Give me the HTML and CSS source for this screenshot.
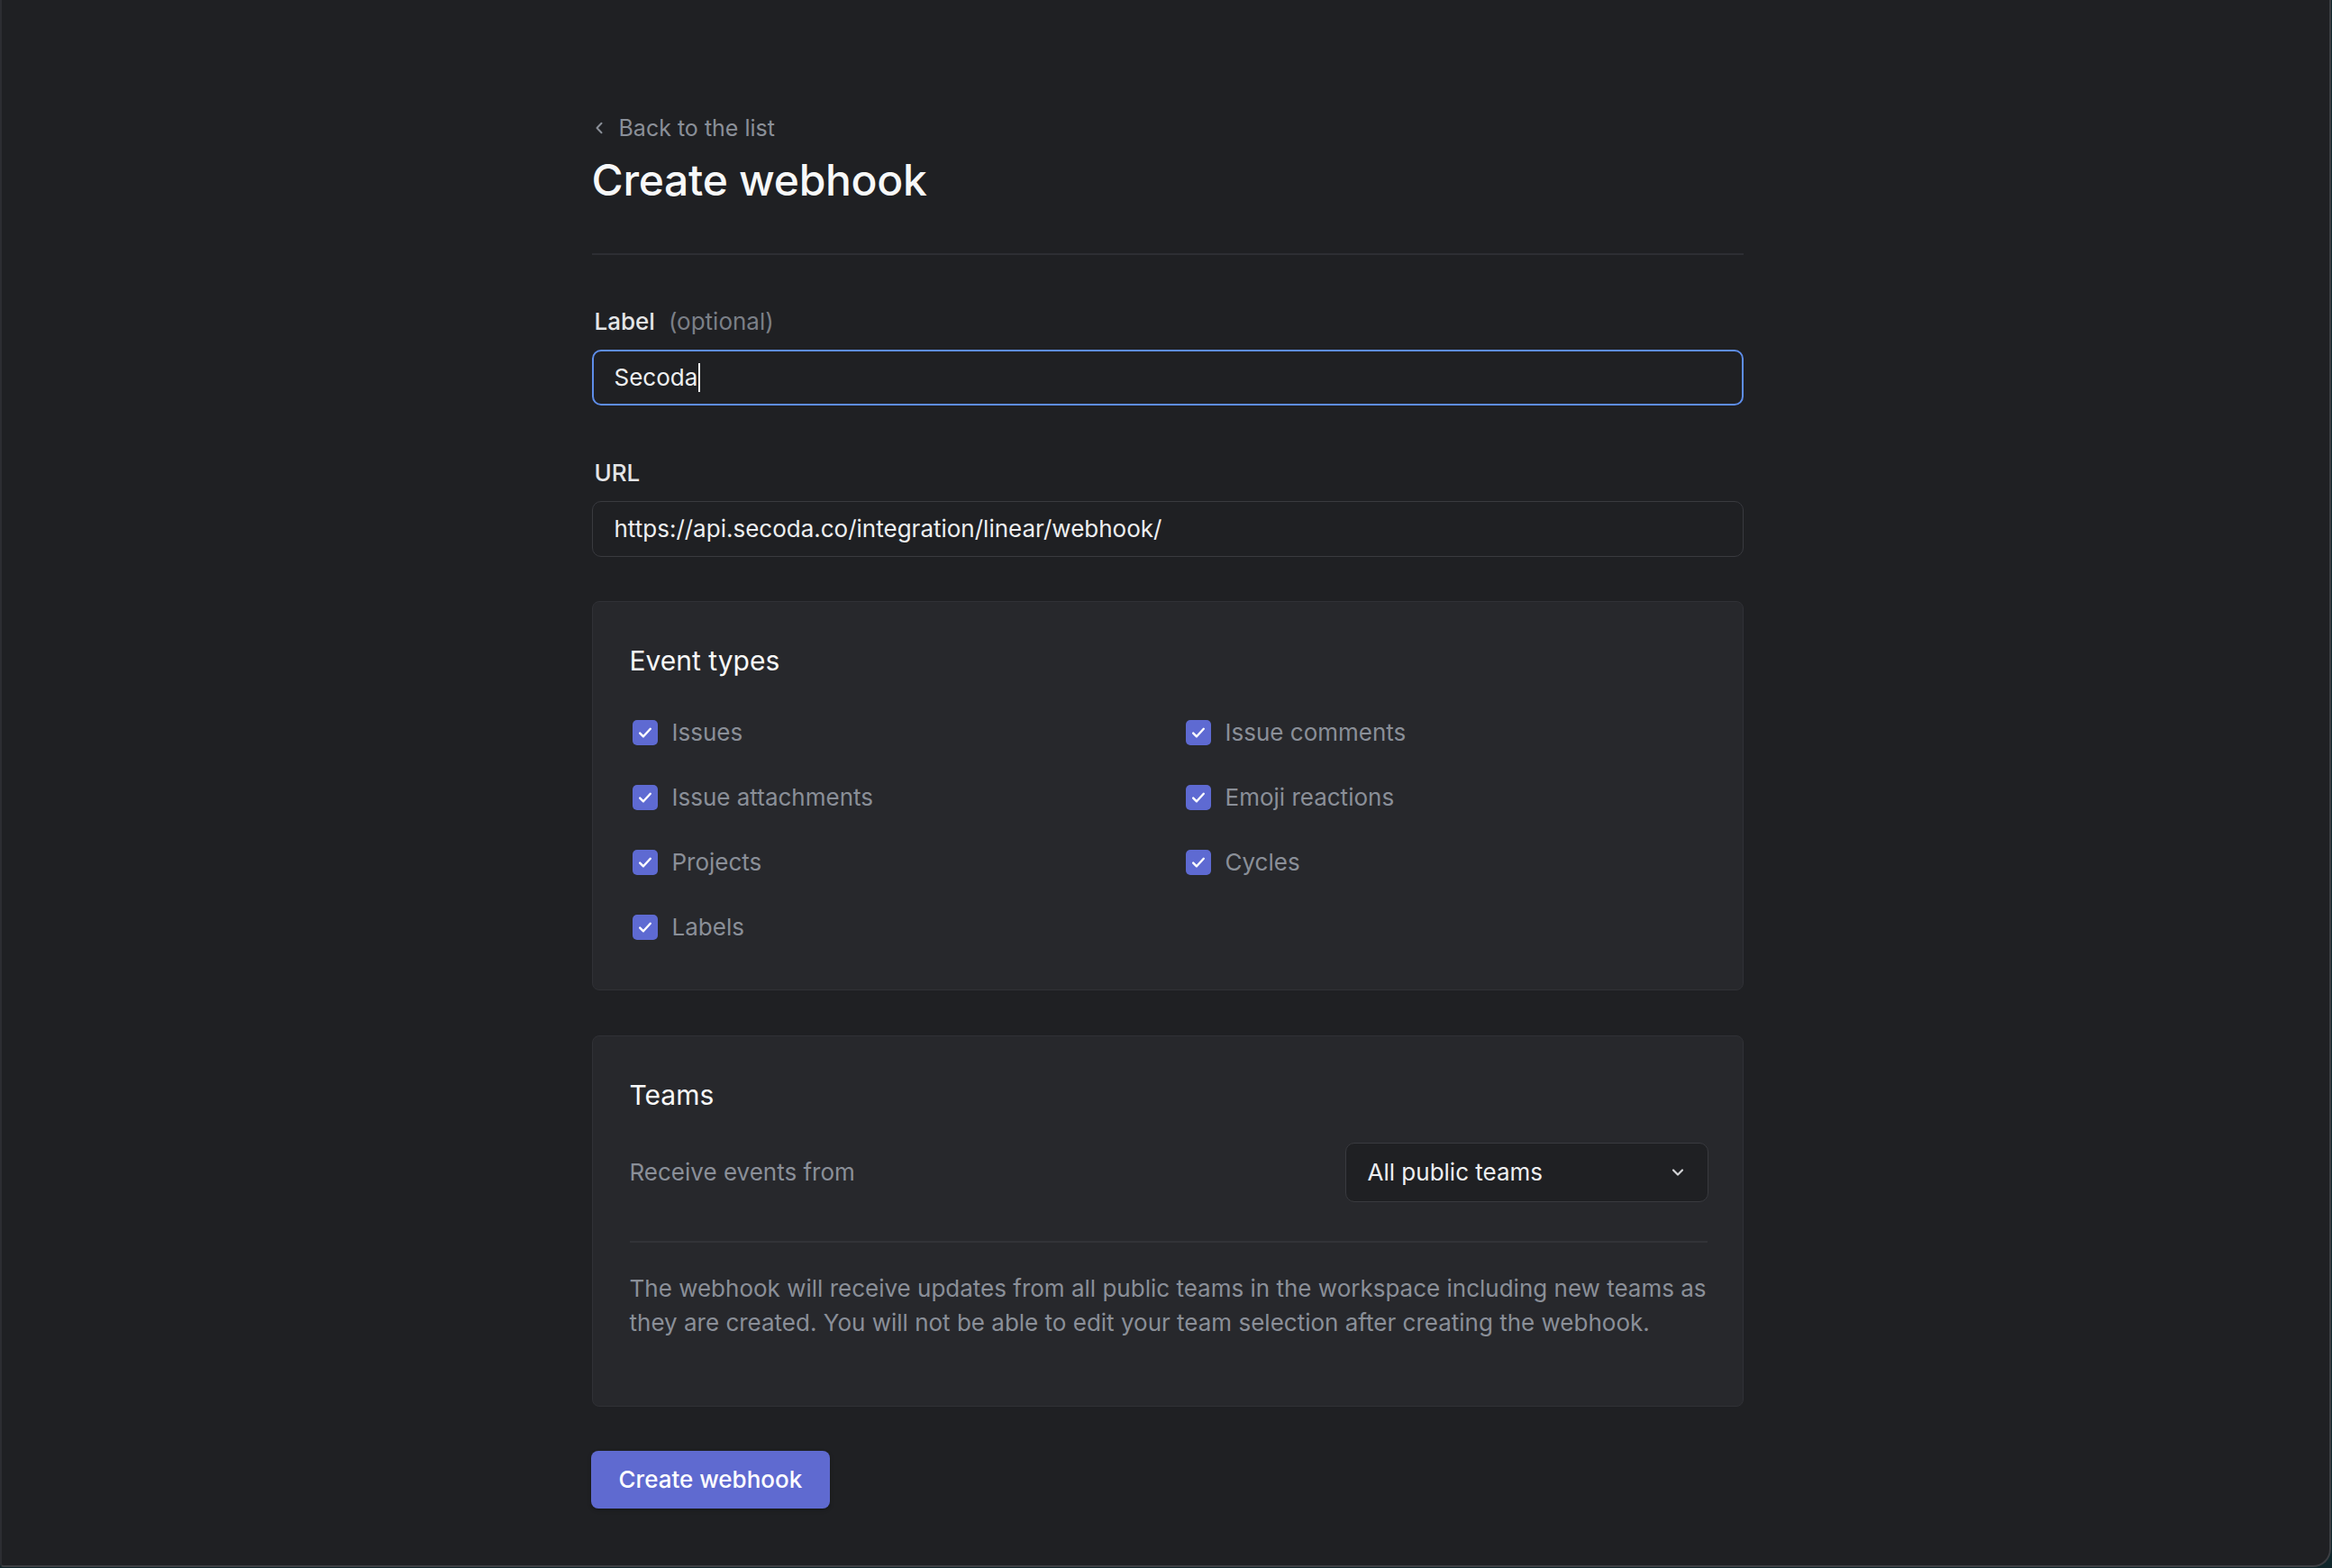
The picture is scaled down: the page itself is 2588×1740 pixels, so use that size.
FILE: index.html
```html
<!DOCTYPE html>
<html lang="en">
<head>
<meta charset="utf-8">
<title>Create webhook</title>
<link rel="stylesheet" href="styles.css">
</head>
<body>
<div class="frame">
  <main class="page">
    <a class="back" href="#">
      <svg class="back-icon" width="12" height="14" viewBox="0 0 12 14"><path d="M8.5 1.8 L3.5 7 L8.5 12.2" fill="none" stroke="#8a8f98" stroke-width="2" stroke-linecap="round" stroke-linejoin="round"/></svg>
      <span>Back to the list</span>
    </a>
    <h1 class="title">Create webhook</h1>
    <hr class="divider">

    <div class="field">
      <div class="field-label"><span class="label-main">Label</span><span class="label-opt">(optional)</span></div>
      <div class="input input-focused"><span>Secoda</span><span class="caret"></span></div>
    </div>

    <div class="field field-url">
      <div class="field-label"><span class="label-main">URL</span></div>
      <div class="input"><span>https://api.secoda.co/integration/linear/webhook/</span></div>
    </div>

    <section class="card card-events">
      <h2 class="card-title">Event types</h2>
      <div class="checks">
        <label class="check"><span class="box"><svg width="28" height="28" viewBox="0 0 28 28"><path d="M8.2 14.6 L12 18.3 L19.8 9.8" fill="none" stroke="#fff" stroke-width="2.4" stroke-linecap="round" stroke-linejoin="round"/></svg></span><span class="check-text">Issues</span></label>
        <label class="check"><span class="box"><svg width="28" height="28" viewBox="0 0 28 28"><path d="M8.2 14.6 L12 18.3 L19.8 9.8" fill="none" stroke="#fff" stroke-width="2.4" stroke-linecap="round" stroke-linejoin="round"/></svg></span><span class="check-text">Issue comments</span></label>
        <label class="check"><span class="box"><svg width="28" height="28" viewBox="0 0 28 28"><path d="M8.2 14.6 L12 18.3 L19.8 9.8" fill="none" stroke="#fff" stroke-width="2.4" stroke-linecap="round" stroke-linejoin="round"/></svg></span><span class="check-text">Issue attachments</span></label>
        <label class="check"><span class="box"><svg width="28" height="28" viewBox="0 0 28 28"><path d="M8.2 14.6 L12 18.3 L19.8 9.8" fill="none" stroke="#fff" stroke-width="2.4" stroke-linecap="round" stroke-linejoin="round"/></svg></span><span class="check-text">Emoji reactions</span></label>
        <label class="check"><span class="box"><svg width="28" height="28" viewBox="0 0 28 28"><path d="M8.2 14.6 L12 18.3 L19.8 9.8" fill="none" stroke="#fff" stroke-width="2.4" stroke-linecap="round" stroke-linejoin="round"/></svg></span><span class="check-text">Projects</span></label>
        <label class="check"><span class="box"><svg width="28" height="28" viewBox="0 0 28 28"><path d="M8.2 14.6 L12 18.3 L19.8 9.8" fill="none" stroke="#fff" stroke-width="2.4" stroke-linecap="round" stroke-linejoin="round"/></svg></span><span class="check-text">Cycles</span></label>
        <label class="check"><span class="box"><svg width="28" height="28" viewBox="0 0 28 28"><path d="M8.2 14.6 L12 18.3 L19.8 9.8" fill="none" stroke="#fff" stroke-width="2.4" stroke-linecap="round" stroke-linejoin="round"/></svg></span><span class="check-text">Labels</span></label>
      </div>
    </section>

    <section class="card card-teams">
      <h2 class="card-title">Teams</h2>
      <div class="teams-row">
        <span class="teams-label">Receive events from</span>
        <div class="select">
          <span>All public teams</span>
          <svg width="16" height="10" viewBox="0 0 16 10"><path d="M3 2.5 L8 7.5 L13 2.5" fill="none" stroke="#d2d3d6" stroke-width="2.2" stroke-linecap="round" stroke-linejoin="round"/></svg>
        </div>
      </div>
      <hr class="card-divider">
      <p class="note">The webhook will receive updates from all public teams in the workspace including new teams as they are created. You will not be able to edit your team selection after creating the webhook.</p>
    </section>

    <button class="btn" type="button">Create webhook</button>
  </main>
</div>
</body>
</html>
```

FILE: styles.css
```css
* { box-sizing: border-box; }

html, body {
  margin: 0;
  padding: 0;
}

body {
  width: 2588px;
  height: 1740px;
  background: #10262b;
  font-family: Inter, "Noto Sans", "Liberation Sans", sans-serif;
  color: #f7f8f8;
  overflow: hidden;
}

.frame {
  width: 2587px;
  height: 1739px;
  background: #1f2023;
  border-left: 2px solid #2c2d32;
  border-right: 2px solid #3d3e43;
  border-bottom: 2px solid #3d3e43;
  border-bottom-right-radius: 20px;
  border-bottom-left-radius: 4px;
}

.page {
  width: 1278px;
  margin: 0 auto;
  padding-top: 126px;
  position: relative;
  left: 2px;
}

.back {
  display: flex;
  align-items: center;
  height: 32px;
  font-size: 25px;
  line-height: 32px;
  color: #8a8f98;
  text-decoration: none;
  padding-left: 2px;
}

.back-icon {
  margin-right: 16px;
}

.title {
  margin: 14px 0 0;
  font-size: 48px;
  line-height: 56px;
  font-weight: 500;
  color: #f7f8f8;
  letter-spacing: -0.3px;
}

.divider {
  margin: 53px 0 0;
  border: 0;
  height: 2px;
  background: #2d2e33;
}

.field {
  margin-top: 58px;
}

.field-url {
  margin-top: 59px;
}

.field-label {
  display: flex;
  align-items: baseline;
  gap: 15px;
  height: 32px;
  line-height: 32px;
  font-size: 26px;
  padding-left: 3px;
  margin-bottom: 15px;
}

.label-main {
  font-weight: 500;
  color: #e4e5e7;
}

.label-opt {
  color: #7b7f87;
}

.input {
  display: flex;
  align-items: center;
  height: 62px;
  border: 1px solid #393a3f;
  border-radius: 10px;
  padding: 0 24px;
  font-size: 26px;
  line-height: 32px;
  color: #eeeff1;
  background: #1f2023;
}

.input-focused {
  border: 2px solid #5e8de9;
  padding: 0 23px;
}

.caret {
  display: inline-block;
  width: 2px;
  height: 32px;
  background: #f7f8f8;
  margin-left: 1px;
}

.card {
  margin-top: 49px;
  background: #27282c;
  border: 1px solid #303136;
  border-radius: 8px;
  padding: 48px 39px 52px 41px;
}

.card-teams {
  margin-top: 50px;
  padding-bottom: 73px;
}

.card-title {
  margin: 0;
  font-size: 30px;
  line-height: 34px;
  font-weight: 400;
  color: #f7f8f8;
}

.checks {
  margin-top: 46px;
  display: grid;
  grid-template-columns: 614px 1fr;
  row-gap: 38px;
  padding-left: 3px;
}

.check {
  display: flex;
  align-items: center;
  height: 34px;
  font-size: 26px;
  line-height: 34px;
  color: #8a8f98;
}

.box {
  width: 28px;
  height: 28px;
  border-radius: 5px;
  background: #5e6ad2;
  margin-right: 16px;
  display: flex;
}

.teams-row {
  margin-top: 36px;
  display: flex;
  align-items: center;
  justify-content: space-between;
}

.teams-label {
  font-size: 26px;
  line-height: 32px;
  color: #8a8f98;
}

.select {
  width: 403px;
  height: 66px;
  display: flex;
  align-items: center;
  justify-content: space-between;
  padding: 0 25px 0 24px;
  border: 1px solid #393a3f;
  border-radius: 10px;
  background: #1f2023;
  font-size: 26px;
  line-height: 32px;
  color: #eeeff1;
  margin-right: -1px;
}

.card-divider {
  margin: 43px 0 0;
  border: 0;
  height: 2px;
  background: #323338;
}

.note {
  margin: 32px -4px 0 0;
  font-size: 26px;
  line-height: 38px;
  color: #8a8f98;
}

.btn {
  display: block;
  margin-top: 49px;
  height: 64px;
  padding: 0 31px;
  border: 0;
  border-radius: 8px;
  background: #5f6ad0;
  color: #ffffff;
  font-family: Inter, "Noto Sans", "Liberation Sans", sans-serif;
  font-size: 26px;
  line-height: 32px;
  font-weight: 500;
  box-shadow: 0 2px 4px rgba(0,0,0,0.25);
  margin-left: -1px;
}
```
